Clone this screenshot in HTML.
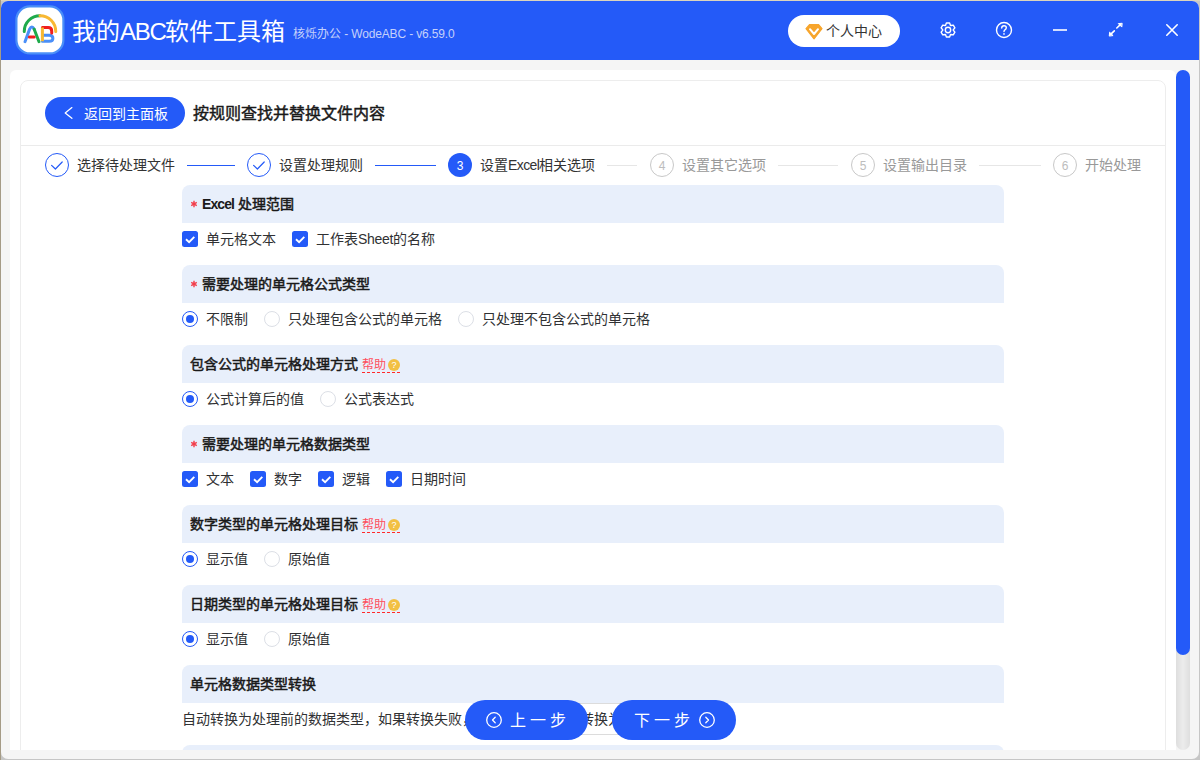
<!DOCTYPE html>
<html lang="zh-CN"><head><meta charset="utf-8">
<style>
*{box-sizing:border-box;margin:0;padding:0}
html,body{width:1200px;height:760px;overflow:hidden}
body{position:relative;background:#c6c6c6;font-family:"Liberation Sans",sans-serif;color:#303133}
.abs{position:absolute}
#win{position:absolute;left:1px;top:1px;width:1198px;height:758px;border-radius:7px;background:#f5f5f5;overflow:hidden;box-shadow:none}
#tb{position:absolute;left:-1px;top:-1px;width:1200px;height:60px;background:#245af8}
.t{position:absolute;white-space:nowrap;line-height:20px;font-size:14px}
#panel{position:absolute;left:9px;top:69px;width:1166px;height:680px;background:#fff;border-radius:6px 6px 0 0;overflow:hidden}
#card{position:absolute;left:10px;top:10px;width:1146px;height:700px;border:1px solid #ededed;border-radius:8px;background:#fff}
.sh{position:absolute;left:182px;width:822px;height:38px;background:#e8effb;border-radius:8px 8px 0 0}
.sh .h{position:absolute;left:8px;top:9px;font-size:14px;line-height:20px;-webkit-text-stroke:0.5px #1a1a1a;color:#1a1a1a;white-space:nowrap}
.req{position:absolute;left:8px;top:14.5px}
.cb{position:absolute;width:16px;height:16px;background:#245af8;border-radius:2.5px}
.cb svg{position:absolute;left:0;top:0}
.rd{position:absolute;width:16px;height:16px;border-radius:50%;border:1px solid #dcdfe6;background:#fff}
.rd.on{border-color:#245af8}
.rd.on:after{content:"";position:absolute;left:3px;top:3px;width:8px;height:8px;border-radius:50%;background:#245af8}
.hl{position:absolute;height:27px;width:38px;border-bottom:1px dashed #ff2a2a}
.hl span{position:absolute;left:0;top:11px;font-size:12px;line-height:16px;color:#ff4f5e;white-space:nowrap}
.hl i{position:absolute;left:26px;top:12.5px;width:12px;height:12px;border-radius:50%;background:#f2c043;color:#fff;font-size:9px;line-height:12px;text-align:center;font-style:normal}
.btn{position:absolute;height:40px;border-radius:20px;background:#245af8;color:#fff}
.sc{position:absolute;width:24px;height:24px;border-radius:50%;border:1px solid #c8c8c8;color:#bdbdbd;font-size:12px;line-height:25px;text-align:center}
</style></head><body>
<div class="abs" style="left:0;top:0;width:1200px;height:1px;background:#dcd4bd"></div><div class="abs" style="left:0;top:0;width:1px;height:760px;background:#a59b86"></div>
<div id="win">

<div id="tb">
  <svg class="abs" style="left:14px;top:4px" width="52" height="52" viewBox="0 0 52 52">
    <rect x="2.4" y="2.4" width="47" height="47" rx="13.5" fill="#fff" stroke="#4a8ff8" stroke-width="2.2"/>
    <g fill="none" stroke-width="3" stroke-linecap="round">
      <path d="M10.25 27.4 A15.75 15.75 0 0 1 26 11.65" stroke="#1faa4b"/>
      <path d="M26 11.65 A15.75 15.75 0 0 1 41.75 27.4" stroke="#f8b833"/>
      <path d="M11 37.7 L15.6 25.2 Q17.8 20.6 20.2 25.2" stroke="#4a8ff8"/>
      <path d="M20.2 25.2 L25 37.7" stroke="#1faa4b"/>
      <path d="M15.4 32.9 L20.2 32.9" stroke="#f01d1d"/>
      <path d="M28.4 31.2 L35.2 31.2 Q38.9 31.2 38.9 34.25 Q38.9 37.3 35.2 37.3 L28.4 37.3" stroke="#4a8ff8"/>
      <path d="M28.4 23.6 L34.2 23.6 Q37.7 23.6 37.7 27.2 L37.7 29" stroke="#f01d1d"/>
      <path d="M28.4 23.6 L28.4 37.3" stroke="#f8b833" stroke-linecap="butt"/>
    </g>
  </svg>
  <div class="t" style="left:72px;top:17px;font-size:24px;line-height:30px;color:#fff">我的<span style="letter-spacing:-1.3px">ABC</span>软件工具箱</div>
  <div class="t" style="left:293px;top:25px;font-size:12px;line-height:18px;color:#c5d1fb">核烁办公<span style="letter-spacing:-0.15px"> - WodeABC - v6.59.0</span></div>
  <div class="abs" style="left:788px;top:15px;width:112px;height:32px;border-radius:16px;background:#fff"></div>
  <svg class="abs" style="left:804px;top:23px" width="20" height="18" viewBox="0 0 20 18">
    <path d="M5.5 1.6 L14.6 1.6 L18 5.7 L10 15.9 L2 5.7 Z" fill="#f7a52c" stroke="#f7a52c" stroke-width="1.2" stroke-linejoin="round"/>
    <path d="M6 6.2 L10 11 L14 6.2" fill="none" stroke="#fff" stroke-width="2" stroke-linecap="round" stroke-linejoin="round"/>
  </svg>
  <div class="t" style="left:826px;top:21px;font-size:14px;line-height:20px;color:#333">个人中心</div>
  <svg class="abs" style="left:938px;top:19.5px" width="20" height="20" viewBox="0 0 20 20">
    <path d="M7.59 5.28 L8.38 2.98 L11.62 2.98 L12.41 5.28 L12.89 5.56 L15.27 5.09 L16.89 7.89 L15.29 9.72 L15.29 10.28 L16.89 12.11 L15.27 14.91 L12.89 14.44 L12.41 14.72 L11.62 17.02 L8.38 17.02 L7.59 14.72 L7.11 14.44 L4.73 14.91 L3.11 12.11 L4.71 10.28 L4.71 9.72 L3.11 7.89 L4.73 5.09 L7.11 5.56 Z" fill="none" stroke="#fff" stroke-width="1.4" stroke-linejoin="round"/>
    <circle cx="10" cy="10" r="2.7" fill="none" stroke="#fff" stroke-width="1.4"/>
  </svg>
  <svg class="abs" style="left:994px;top:19.5px" width="20" height="20" viewBox="0 0 20 20">
    <circle cx="10" cy="10" r="7.5" fill="none" stroke="#fff" stroke-width="1.4"/>
    <path d="M7.7 8 Q7.7 5.7 10 5.7 Q12.3 5.7 12.3 7.8 Q12.3 9.1 10.9 9.8 Q10 10.3 10 11.5" fill="none" stroke="#fff" stroke-width="1.4" stroke-linecap="round"/>
    <circle cx="10" cy="13.9" r="0.85" fill="#fff"/>
  </svg>
  <div class="abs" style="left:1053px;top:29px;width:14px;height:2px;background:rgba(255,255,255,.8)"></div>
  <svg class="abs" style="left:1104.6px;top:18.9px" width="20" height="20" viewBox="0 0 20 20">
    <g fill="none" stroke="#fff" stroke-width="1.6" stroke-linecap="round" stroke-linejoin="round">
      <path d="M9.3 11.8 L5.6 15.3 M11.8 9 L15.3 5.7"/>
      <path d="M4.3 16.7 L4.6 13.2 L7.8 16.3 Z M16.8 4.3 L13.3 4.6 L16.5 7.8 Z" fill="#fff" stroke-width="1"/>
    </g>
  </svg>
  <svg class="abs" style="left:1163px;top:21px" width="18" height="18" viewBox="0 0 18 18">
    <path d="M3.8 3.8 L14.2 14.2 M14.2 3.8 L3.8 14.2" stroke="#fff" stroke-width="1.6" stroke-linecap="round"/>
  </svg>
</div>
<div id="panel"><div id="card"></div><div class="abs" style="left:-10px;top:-70px;width:1200px;height:760px">
<div class="abs" style="left:21px;top:145px;width:1144px;height:1px;background:#ebebeb"></div>
<div class="abs" style="left:45px;top:97px;width:140px;height:32px;border-radius:16px;background:#245af8"></div>
<svg class="abs" style="left:62px;top:105px" width="14" height="16" viewBox="0 0 14 16"><path d="M9.9 2.6 L3.2 7.9 L9.9 13.3" fill="none" stroke="#fff" stroke-width="1.3" stroke-linecap="round" stroke-linejoin="round"/></svg>
<div class="t" style="left:84px;top:103.5px;color:#fff">返回到主面板</div>
<div class="t" style="left:193px;top:102.5px;font-size:16px;line-height:22px;-webkit-text-stroke:0.45px #1a1a1a;color:#1a1a1a">按规则查找并替换文件内容</div>
<div class="abs" style="left:45px;top:153px;width:24px;height:24px;border-radius:50%;border:1px solid #245af8"></div><svg class="abs" style="left:45px;top:153px" width="24" height="24" viewBox="0 0 24 24"><path d="M6.6 12.4 L10.4 16 L17.2 9" fill="none" stroke="#245af8" stroke-width="1.2" stroke-linecap="round" stroke-linejoin="round"/></svg><div class="t" style="left:77px;top:155px;color:#333">选择待处理文件</div><div class="abs" style="left:187px;top:165px;width:48px;height:1px;background:#245af8"></div>

<div class="abs" style="left:247px;top:153px;width:24px;height:24px;border-radius:50%;border:1px solid #245af8"></div><svg class="abs" style="left:247px;top:153px" width="24" height="24" viewBox="0 0 24 24"><path d="M6.6 12.4 L10.4 16 L17.2 9" fill="none" stroke="#245af8" stroke-width="1.2" stroke-linecap="round" stroke-linejoin="round"/></svg><div class="t" style="left:279px;top:155px;color:#333">设置处理规则</div><div class="abs" style="left:375px;top:165px;width:61px;height:1px;background:#245af8"></div>

<div class="abs" style="left:448px;top:153px;width:24px;height:24px;border-radius:50%;background:#245af8;color:#fff;font-size:12px;line-height:26.5px;text-align:center">3</div>
<div class="t" style="left:480px;top:155px;color:#333">设置<span style="letter-spacing:-0.6px">Excel</span>相关选项</div>
<div class="abs" style="left:607px;top:165px;width:30px;height:1px;background:#e6e6e6"></div>
<div class="sc" style="left:650px;top:153px">4</div><div class="t" style="left:682px;top:155px;color:#999">设置其它选项</div><div class="abs" style="left:778px;top:165px;width:60px;height:1px;background:#e6e6e6"></div>

<div class="sc" style="left:851px;top:153px">5</div><div class="t" style="left:883px;top:155px;color:#999">设置输出目录</div><div class="abs" style="left:979px;top:165px;width:62px;height:1px;background:#e6e6e6"></div>

<div class="sc" style="left:1053px;top:153px">6</div><div class="t" style="left:1085px;top:155px;color:#999">开始处理</div>

<div class="sh" style="top:185px"><svg class="req" width="8" height="8" viewBox="0 0 8 8"><path d="M4 0.8 L4 7.2 M1.2 2.4 L6.8 5.6 M6.8 2.4 L1.2 5.6" stroke="#f33d4a" stroke-width="1.4"/></svg><div class="h" style="left:20px"><span style="font-weight:bold;-webkit-text-stroke:0;letter-spacing:-0.9px">Excel</span> 处理范围</div></div>

<div class="cb" style="left:182px;top:231px"><svg width="16" height="16" viewBox="0 0 16 16"><path d="M4 8.3 L7.1 11.1 L12.3 5.9" fill="none" stroke="#fff" stroke-width="1.9" stroke-linecap="butt" stroke-linejoin="miter"/></svg></div><div class="t" style="left:206px;top:229px">单元格文本</div>
<div class="cb" style="left:292px;top:231px"><svg width="16" height="16" viewBox="0 0 16 16"><path d="M4 8.3 L7.1 11.1 L12.3 5.9" fill="none" stroke="#fff" stroke-width="1.9" stroke-linecap="butt" stroke-linejoin="miter"/></svg></div><div class="t" style="left:316px;top:229px">工作表<span style="letter-spacing:-0.3px">Sheet</span>的名称</div>

<div class="sh" style="top:265px"><svg class="req" width="8" height="8" viewBox="0 0 8 8"><path d="M4 0.8 L4 7.2 M1.2 2.4 L6.8 5.6 M6.8 2.4 L1.2 5.6" stroke="#f33d4a" stroke-width="1.4"/></svg><div class="h" style="left:20px">需要处理的单元格公式类型</div></div>

<div class="rd on" style="left:182px;top:311px"></div><div class="t" style="left:206px;top:309px">不限制</div>
<div class="rd" style="left:264px;top:311px"></div><div class="t" style="left:288px;top:309px">只处理包含公式的单元格</div>
<div class="rd" style="left:458px;top:311px"></div><div class="t" style="left:482px;top:309px">只处理不包含公式的单元格</div>

<div class="sh" style="top:345px"><div class="h">包含公式的单元格处理方式</div></div>
<div class="hl" style="left:362px;top:346px"><span>帮助</span><i>?</i></div>

<div class="rd on" style="left:182px;top:391px"></div><div class="t" style="left:206px;top:389px">公式计算后的值</div>
<div class="rd" style="left:320px;top:391px"></div><div class="t" style="left:344px;top:389px">公式表达式</div>

<div class="sh" style="top:425px"><svg class="req" width="8" height="8" viewBox="0 0 8 8"><path d="M4 0.8 L4 7.2 M1.2 2.4 L6.8 5.6 M6.8 2.4 L1.2 5.6" stroke="#f33d4a" stroke-width="1.4"/></svg><div class="h" style="left:20px">需要处理的单元格数据类型</div></div>

<div class="cb" style="left:182px;top:471px"><svg width="16" height="16" viewBox="0 0 16 16"><path d="M4 8.3 L7.1 11.1 L12.3 5.9" fill="none" stroke="#fff" stroke-width="1.9" stroke-linecap="butt" stroke-linejoin="miter"/></svg></div><div class="t" style="left:206px;top:469px">文本</div>
<div class="cb" style="left:250px;top:471px"><svg width="16" height="16" viewBox="0 0 16 16"><path d="M4 8.3 L7.1 11.1 L12.3 5.9" fill="none" stroke="#fff" stroke-width="1.9" stroke-linecap="butt" stroke-linejoin="miter"/></svg></div><div class="t" style="left:274px;top:469px">数字</div>
<div class="cb" style="left:318px;top:471px"><svg width="16" height="16" viewBox="0 0 16 16"><path d="M4 8.3 L7.1 11.1 L12.3 5.9" fill="none" stroke="#fff" stroke-width="1.9" stroke-linecap="butt" stroke-linejoin="miter"/></svg></div><div class="t" style="left:342px;top:469px">逻辑</div>
<div class="cb" style="left:386px;top:471px"><svg width="16" height="16" viewBox="0 0 16 16"><path d="M4 8.3 L7.1 11.1 L12.3 5.9" fill="none" stroke="#fff" stroke-width="1.9" stroke-linecap="butt" stroke-linejoin="miter"/></svg></div><div class="t" style="left:410px;top:469px">日期时间</div>

<div class="sh" style="top:505px"><div class="h">数字类型的单元格处理目标</div></div>
<div class="hl" style="left:362px;top:506px"><span>帮助</span><i>?</i></div>

<div class="rd on" style="left:182px;top:551px"></div><div class="t" style="left:206px;top:549px">显示值</div>
<div class="rd" style="left:264px;top:551px"></div><div class="t" style="left:288px;top:549px">原始值</div>

<div class="sh" style="top:585px"><div class="h">日期类型的单元格处理目标</div></div>
<div class="hl" style="left:362px;top:586px"><span>帮助</span><i>?</i></div>

<div class="rd on" style="left:182px;top:631px"></div><div class="t" style="left:206px;top:629px">显示值</div>
<div class="rd" style="left:264px;top:631px"></div><div class="t" style="left:288px;top:629px">原始值</div>

<div class="sh" style="top:665px"><div class="h">单元格数据类型转换</div></div>

<div class="abs" style="left:540px;top:703px;width:140px;height:32px;border:1px solid #dcdcdc;background:#fff"></div>
<div class="t" style="left:182px;top:709px">自动转换为处理前的数据类型，如果转换失败，</div>
<div class="t" style="left:580px;top:709px">转换为文本</div>
<div class="sh" style="top:745px"></div>
</div></div>

<div class="btn" style="left:464px;top:699px;width:123px"></div>
<svg class="abs" style="left:484px;top:710px" width="18" height="18" viewBox="0 0 18 18"><circle cx="9" cy="9" r="7.3" fill="none" stroke="#fff" stroke-width="1.3"/><path d="M10.2 6.3 L7.5 9 L10.2 11.7" fill="none" stroke="#fff" stroke-width="1.3" stroke-linecap="round" stroke-linejoin="round"/></svg>
<div class="t" style="left:509px;top:709px;font-size:16px;line-height:22px;letter-spacing:4px;color:#fff">上一步</div>
<div class="btn" style="left:611px;top:699px;width:124px"></div>
<div class="t" style="left:633px;top:709px;font-size:16px;line-height:22px;letter-spacing:4px;color:#fff">下一步</div>
<svg class="abs" style="left:696.5px;top:710px" width="18" height="18" viewBox="0 0 18 18"><circle cx="9" cy="9" r="7.3" fill="none" stroke="#fff" stroke-width="1.3"/><path d="M7.8 6.3 L10.5 9 L7.8 11.7" fill="none" stroke="#fff" stroke-width="1.3" stroke-linecap="round" stroke-linejoin="round"/></svg>
<div class="abs" style="left:1175px;top:69px;width:14px;height:680px;border-radius:7px;background:linear-gradient(90deg,#dedede,#ececec 50%,#dedede)"></div>
<div class="abs" style="left:1175px;top:69px;width:14px;height:585px;border-radius:7px;background:#245af8"></div>
</div>
</body></html>
